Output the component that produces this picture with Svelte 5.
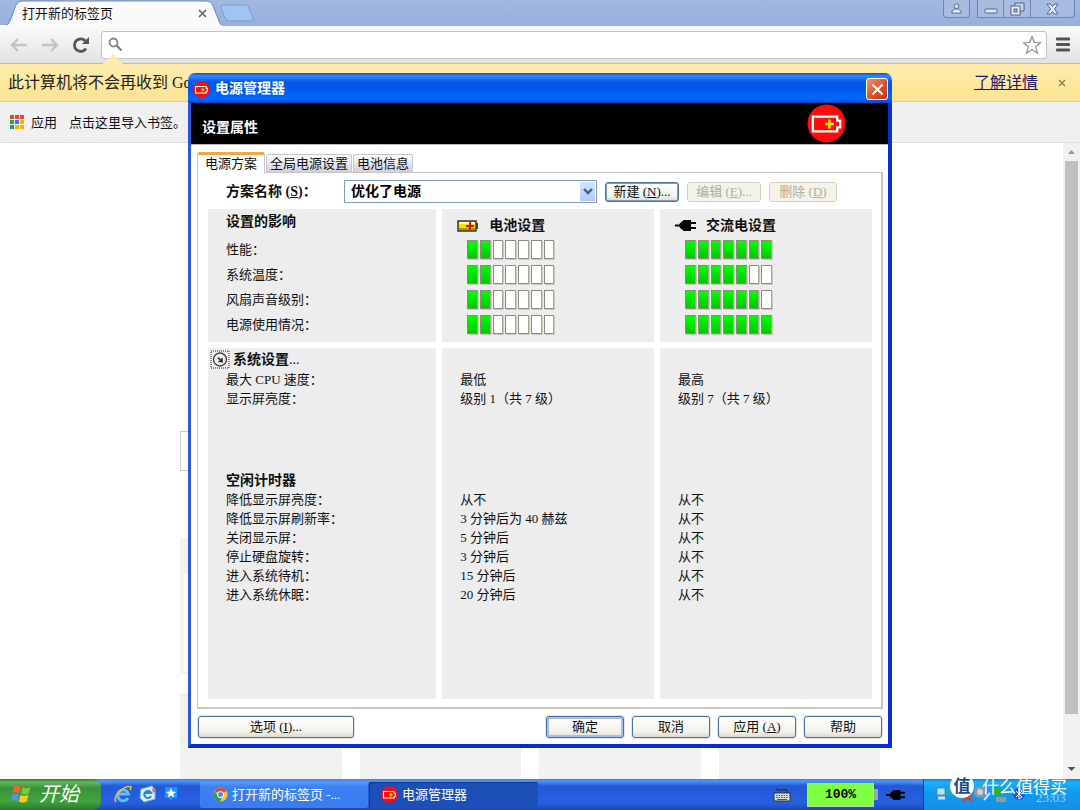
<script>
  const impact = [
    { label: '性能：', battery: 2, ac: 7 },
    { label: '系统温度：', battery: 2, ac: 5 },
    { label: '风扇声音级别：', battery: 2, ac: 6 },
    { label: '电源使用情况：', battery: 2, ac: 7 },
  ];
  const system = [
    { label: '最大 CPU 速度：', battery: '最低', ac: '最高' },
    { label: '显示屏亮度：', battery: '级别 1（共 7 级）', ac: '级别 7（共 7 级）' },
  ];
  const timers = [
    { label: '降低显示屏亮度：', battery: '从不', ac: '从不' },
    { label: '降低显示屏刷新率：', battery: '3 分钟后为 40 赫兹', ac: '从不' },
    { label: '关闭显示屏：', battery: '5 分钟后', ac: '从不' },
    { label: '停止硬盘旋转：', battery: '3 分钟后', ac: '从不' },
    { label: '进入系统待机：', battery: '15 分钟后', ac: '从不' },
    { label: '进入系统休眠：', battery: '20 分钟后', ac: '从不' },
  ];
  const cells = [1, 2, 3, 4, 5, 6, 7];
  const appDots = ['#e8453c', '#e8453c', '#e8453c', '#2ba24c', '#3b7ded', '#f5b400', '#2ba24c', '#f5b400', '#f5b400'];
</script>

{#snippet powerIcon(size)}
  <svg width={size} height={size} viewBox="0 0 40 40" aria-hidden="true">
    <circle cx="20" cy="20" r="19.5" fill="#fb0d0d" />
    <path d="M6 13H31V17H34V24H31V28H6Z" fill="none" stroke="#fff" stroke-width="2.4" />
    <path d="M23 16V25M18.500 20.500H27.500" stroke="#d8f000" stroke-width="2.600" />
  </svg>
{/snippet}

{#snippet plugIcon(w, h)}
  <svg width={w} height={h} viewBox="0 0 21 13" aria-hidden="true">
    <path d="M0 5.500H4L6 3L8 2V1H16V3H21V5H16V8H21V10H16V12H8V11L6 10L4 7.500H0Z" fill="#050505" />
  </svg>
{/snippet}

{#snippet meter(value)}
  <div class="meter" role="meter" aria-valuemin="0" aria-valuemax="7" aria-valuenow={value} aria-label="级别">
    {#each cells as n}<i class:on={n <= value}></i>{/each}
  </div>
{/snippet}

<div class="screen">
  <main class="browser">
    <div class="tabstrip">
      <svg class="tabshape" width="222" height="26" viewBox="0 0 222 26" aria-hidden="true">
        <path d="M0 26H4Q8 26 10 21L16 5Q18 1 22 1H206Q211 1 213 6L219 21Q221 26 222 26Z" fill="#fafafa" stroke="#7187b3" />
        <path d="M0 26H222" stroke="#fafafa" stroke-width="2" />
      </svg>
      <div class="tablabel">
        <span>打开新的标签页</span>
        <button class="plain" aria-label="关闭标签页">
          <svg width="9" height="9" viewBox="0 0 9 9"><path d="M1 1L8 8M8 1L1 8" stroke="#666" stroke-width="1.600" /></svg>
        </button>
      </div>
      <button class="plain newtab" aria-label="新标签页">
        <svg width="34" height="18" viewBox="0 0 34 18"><path d="M3 1H25Q28 1 29 4L33 14Q33 17 30 17H9Q6 17 5 14L1 4Q1 1 3 1Z" fill="#a0c5f2" stroke="#7d9bd0" /></svg>
      </button>
      <div class="winbuttons">
        <button class="wb person" aria-label="用户">
          <svg width="11" height="11" viewBox="0 0 12 12"><circle cx="6" cy="3.500" r="2.500" fill="#dfe7f5" stroke="#556585" /><path d="M1 11V9L4 6.500H8L11 9V11Z" fill="#dfe7f5" stroke="#556585" /></svg>
        </button>
        <div class="wbgroup">
          <button class="wb" aria-label="最小化"><svg width="14" height="12" viewBox="0 0 14 12"><rect x="1" y="6" width="12" height="4" rx="1" fill="#e4ebf7" stroke="#556585" /></svg></button>
          <button class="wb" aria-label="还原"><svg width="15" height="14" viewBox="0 0 15 14"><path d="M5 1H14V9H5Z" fill="#c8d5ed" stroke="#556585" /><rect x="1" y="4" width="9" height="9" fill="#e4ebf7" stroke="#556585" /><rect x="4" y="7" width="3" height="3" fill="#a3b8de" stroke="#556585" /></svg></button>
          <button class="wb close" aria-label="关闭"><svg width="13" height="12" viewBox="0 0 13 12"><path d="M1 1H4.500L6.500 3.500L8.500 1H12L8.500 6L12 11H8.500L6.500 8.500L4.500 11H1L4.500 6Z" fill="#e4ebf7" stroke="#556585" /></svg></button>
        </div>
      </div>
    </div>

    <div class="toolbar">
      <button class="plain" aria-label="后退"><svg width="18" height="14" viewBox="0 0 18 14"><path d="M8 1L2 7L8 13M2 7H17" fill="none" stroke="#c4c4c4" stroke-width="2.400" /></svg></button>
      <button class="plain" aria-label="前进"><svg width="18" height="14" viewBox="0 0 18 14"><path d="M10 1L16 7L10 13M16 7H1" fill="none" stroke="#c4c4c4" stroke-width="2.400" /></svg></button>
      <button class="plain" aria-label="重新加载"><svg width="18" height="18" viewBox="0 0 18 18"><path d="M14 12.500A6.300 6.300 0 1 1 13.500 5" fill="none" stroke="#555" stroke-width="2.800" /><path d="M17 1V8H10Z" fill="#555" /></svg></button>
      <div class="omnibox">
        <svg width="15" height="15" viewBox="0 0 15 15" aria-hidden="true"><circle cx="5.500" cy="5.500" r="4" fill="none" stroke="#888" stroke-width="1.800" /><path d="M8.500 8.500L13.500 13.500" stroke="#888" stroke-width="2.400" /></svg>
        <input type="text" aria-label="地址栏" />
        <button class="plain" aria-label="收藏"><svg width="20" height="20" viewBox="0 0 20 20"><path d="M10 1.500L12.300 7.300L18.500 7.700L13.700 11.600L15.300 18L10 14.500L4.700 18L6.300 11.600L1.500 7.700L7.700 7.300Z" fill="#fff" stroke="#999" stroke-width="1.300" /></svg></button>
      </div>
      <button class="plain menu" aria-label="菜单"><svg width="14" height="15" viewBox="0 0 14 15"><path d="M1 2H13M1 7.500H13M1 13H13" stroke="#555" stroke-width="2.800" stroke-linecap="round" /></svg></button>
    </div>

    <div class="infobar">
      <svg class="notch" width="20" height="10" viewBox="0 0 20 10" aria-hidden="true"><path d="M0 10L10 0L20 10Z" fill="#feecae" /></svg>
      <span>此计算机将不会再收到 Go</span>
      <a href="#details">了解详情</a>
      <button class="plain" aria-label="关闭信息栏"><svg width="8" height="8" viewBox="0 0 8 8"><path d="M1 1L7 7M7 1L1 7" stroke="#8c825e" stroke-width="1.500" /></svg></button>
    </div>

    <div class="bookmarks">
      <a href="#apps">
        <svg width="14" height="14" viewBox="0 0 14 14" aria-hidden="true">
          {#each appDots as c, i}<rect x={(i % 3) * 5} y={Math.floor(i / 3) * 5} width="4" height="4" fill={c} />{/each}
        </svg>
        应用
      </a>
      <span>点击这里导入书签。</span>
    </div>

    <div class="viewport">
      <div class="page">
        <div class="searchbox"></div>
        <div class="thumbs first">{#each [1, 2, 3, 4] as t}<div class="thumb"><div></div></div>{/each}</div>
        <div class="thumbs">{#each [1, 2, 3, 4] as t}<div class="thumb"></div>{/each}</div>
      </div>
      <div class="scrollbar">
        <svg width="17" height="18" viewBox="0 0 17 18" aria-hidden="true"><path d="M5 11L8.500 7L12 11Z" fill="#999" /></svg>
        <div class="track"><div class="handle"></div></div>
        <svg width="17" height="17" viewBox="0 0 17 17" aria-hidden="true"><path d="M4.500 5H12.500L8.500 9Z" fill="#555" /></svg>
      </div>
    </div>
  </main>

  <section class="dialog" aria-label="电源管理器">
    <header class="titlebar">
      {@render powerIcon(17)}
      <h1>电源管理器</h1>
      <button class="xclose" aria-label="关闭"><svg width="13" height="13" viewBox="0 0 13 13"><path d="M1.500 1.500L11.500 11.500M11.500 1.500L1.500 11.500" stroke="#fff" stroke-width="2.200" /></svg></button>
    </header>
    <div class="frame">
      <div class="banner">
        <h2>设置属性</h2>
        {@render powerIcon(39)}
      </div>
      <div class="body">
        <div class="tabs" role="tablist">
          <button role="tab" class="active" aria-selected="true">电源方案</button>
          <button role="tab" aria-selected="false">全局电源设置</button>
          <button role="tab" aria-selected="false">电池信息</button>
        </div>
        <div class="panel">
          <div class="scheme">
            <label for="scheme">方案名称 (<u>S</u>)：</label>
            <div class="combo">
              <select id="scheme"><option>优化了电源</option></select>
              <span class="arrow"><svg width="10" height="7" viewBox="0 0 10 7" aria-hidden="true"><path d="M1 1L5 5L9 1" fill="none" stroke="#445a88" stroke-width="2.400" /></svg></span>
            </div>
            <button class="xp focusring">新建 (<u>N</u>)...</button>
            <button class="xp" disabled>编辑 (<u>E</u>)...</button>
            <button class="xp narrow" disabled>删除 (<u>D</u>)</button>
          </div>

          <table>
            <colgroup><col class="c1" /><col class="c2" /><col class="c3" /></colgroup>
            <tbody>
              <tr class="head">
                <th>设置的影响</th>
                <th class="src"><div>
                  <svg width="22" height="13" viewBox="0 0 22 13" aria-hidden="true"><rect x="1" y="2" width="18" height="10" fill="#f2e600" stroke="#333" stroke-width="1.500" /><rect x="2" y="3" width="16" height="2" fill="#fffcb0" /><rect x="2" y="9" width="16" height="2" fill="#a89b00" /><rect x="19" y="4" width="2" height="6" fill="#444" /><path d="M13 3V11M9 7H17" stroke="#e01010" stroke-width="2" /></svg>
                  电池设置
                </div></th>
                <th class="src"><div>{@render plugIcon(21, 13)}交流电设置</div></th>
              </tr>
              {#each impact as r}
                <tr class="tall"><th scope="row" class="lbl">{r.label}</th><td class="m">{@render meter(r.battery)}</td><td class="m">{@render meter(r.ac)}</td></tr>
              {/each}
              <tr class="end"><td></td><td></td><td></td></tr>
            </tbody>
            <tbody>
              <tr class="gap"><td colspan="3"></td></tr>
              <tr class="sys">
                <th><div>
                  <svg width="20" height="19" viewBox="0 0 20 19" aria-hidden="true"><rect x="1" y="1" width="18" height="17" fill="none" stroke="#222" stroke-dasharray="1 1" /><circle cx="10" cy="9.500" r="6.500" fill="#eee" stroke="#444" stroke-width="1.400" /><path d="M8 7.500L12 11.500V8M12 11.500H8.500" fill="none" stroke="#222" stroke-width="1.500" /></svg>
                  <span>系统设置<em>...</em></span>
                </div></th><td></td><td></td>
              </tr>
              {#each system as r}
                <tr><th scope="row" class="lbl">{r.label}</th><td>{r.battery}</td><td>{r.ac}</td></tr>
              {/each}
              <tr class="space"><td></td><td></td><td></td></tr>
              <tr><th>空闲计时器</th><td></td><td></td></tr>
              {#each timers as r}
                <tr><th scope="row" class="lbl">{r.label}</th><td>{r.battery}</td><td>{r.ac}</td></tr>
              {/each}
              <tr class="tail"><td></td><td></td><td></td></tr>
            </tbody>
          </table>
        </div>
        <footer>
          <button class="xp options">选项 (<u>I</u>)...</button>
          <button class="xp default">确定</button>
          <button class="xp">取消</button>
          <button class="xp">应用 (<u>A</u>)</button>
          <button class="xp">帮助</button>
        </footer>
      </div>
    </div>
  </section>

  <nav class="taskbar">
    <button class="start">
      <svg width="21" height="21" viewBox="0 0 20 20" aria-hidden="true">
        <path d="M3 3Q6 1 9.500 3L8 9.500Q5 8 1.500 9.500Z" fill="#f06424" />
        <path d="M11 4Q14 5.500 18.500 4L17 10Q13 11.500 9.500 10Z" fill="#7fc832" />
        <path d="M1 11Q4 9.500 7.600 11L6 17Q3 15.500 0 17Z" fill="#5a8df0" />
        <path d="M9 11.500Q12 13 16.500 11.500L15 17.500Q11 19.500 7.500 17.500Z" fill="#fbc81e" />
      </svg>
      <span>开始</span>
    </button>
    <div class="quick">
      <a href="#ie" aria-label="Internet Explorer"><svg width="18" height="18" viewBox="0 0 18 18"><path d="M14 13A5.500 5.500 0 1 1 14.500 9H5" fill="none" stroke="#5cc2f7" stroke-width="2.800" /><path d="M2 17Q-1 13 6 6Q13 0 17 2Q17 3 16 5" fill="none" stroke="#f5bb32" stroke-width="1.700" /></svg></a>
      <a href="#mail" aria-label="邮件"><svg width="18" height="18" viewBox="0 0 18 18"><path d="M2 4L13 1L16 5V14L5 17L1 13Z" fill="#d9eefa" stroke="#77b5e0" /><path d="M12 11A3.500 3.500 0 1 1 12 8H6" fill="none" stroke="#2a83cc" stroke-width="2" /><path d="M13 3L17 6L14 8Z" fill="#e0653c" /></svg></a>
      <a href="#star" aria-label="收藏"><svg width="14" height="16" viewBox="0 0 14 16"><path d="M1 1H13V12H9L7 15L5 12H1Z" fill="#1e96ff" /><path d="M7 2L8.500 5.500L12 6L9.300 8L10.200 11.500L7 9.600L3.800 11.500L4.700 8L2 6L5.500 5.500Z" fill="#fff" /></svg></a>
    </div>
    <div class="tasks">
      <button>
        <svg width="15" height="15" viewBox="0 0 16 16" aria-hidden="true"><circle cx="8" cy="8" r="7.500" fill="#fbc62e" /><path d="M8 8L1.500 4.200A7.500 7.500 0 0 1 14.500 4.200Z" fill="#df4b3c" /><path d="M1.500 4.200A7.500 7.500 0 0 0 7.500 15.500L10.500 9L6 10Z" fill="#2f9e53" /><circle cx="8" cy="8" r="3.600" fill="#fff" /><circle cx="8" cy="8" r="2.700" fill="#4b8bf5" /></svg>
        <span>打开新的标签页 -...</span>
      </button>
      <button class="pressed">{@render powerIcon(17)}<span>电源管理器</span></button>
    </div>
    <div class="band">
      <svg width="18" height="15" viewBox="0 0 18 15" aria-hidden="true"><path d="M4 1V3H14V6" fill="none" stroke="#222" /><rect x="1" y="6" width="16" height="8" fill="#ddd" stroke="#333" /><path d="M3 8.500H15M3 10.500H15" stroke="#555" stroke-dasharray="1.500 1" /><path d="M4 12.500H14" stroke="#555" /></svg>
      <div class="battery"><div class="charge">100%</div><i></i></div>
      {@render plugIcon(19, 14)}
    </div>
    <div class="tray">
      <div class="icons">
        <svg width="112" height="20" viewBox="0 0 112 20" aria-hidden="true">
          <rect x="1" y="4" width="8" height="7" fill="#b9e0ff" stroke="#5a88b0" /><path d="M2 14H9" stroke="#ddd" stroke-width="3" /><path d="M11 5V10M13.500 4V11M16 3V12" stroke="#37c24a" stroke-width="1.300" />
          <path d="M26 10L36 17M36 10L26 17" stroke="#d43a3a" stroke-width="2.500" />
          <circle cx="44" cy="8" r="6" fill="#8b97a3" /><circle cx="44" cy="8" r="3" fill="#c7d2da" /><path d="M48 16L54 9" stroke="#cfe0ff" stroke-width="2" />
          <path d="M58 3H66V9L62 14L58 9Z" fill="#35ad36" /><path d="M60 13H70V18H60Z" fill="#8f9aa0" />
          <circle cx="83" cy="10" r="6" fill="#2456e0" /><path d="M80 7L86 13L83 15V4L86 7L80 13" fill="none" stroke="#fff" />
        </svg>
        <span class="clock">23:03</span>
      </div>
      <div class="mark"><b>值</b><span>什么值得买</span></div>
    </div>
  </nav>
</div>

<style>
  :global(body) { margin: 0; }
  .screen {
    position: relative;
    display: flex;
    flex-direction: column;
    min-height: 100vh;
    font-family: "Liberation Serif", "Noto Sans CJK SC", serif;
    font-size: 13px;
    line-height: 19px;
    color: #111;
    background: #fff;
  }
  .screen :global(*) { box-sizing: border-box; }
  svg { display: block; flex: none; }
  button { font: inherit; color: inherit; white-space: nowrap; }
  .plain { border: 0; padding: 0; background: none; }
  h1, h2 { margin: 0; font-size: 14px; line-height: 20px; color: #fff; }

  .browser { flex: 1; display: flex; flex-direction: column; }
  .tabstrip { position: relative; display: flex; height: 26px; background: linear-gradient(#a2b8e0, #98afdb); }
  .tabshape { position: absolute; left: 0; top: 0; }
  .tablabel { position: relative; width: 220px; padding: 0 13px 0 22px; display: flex; align-items: center; justify-content: space-between; }
  .newtab { height: 18px; margin-top: 4px; }
  .winbuttons { margin-left: auto; display: flex; gap: 7px; padding-right: 5px; }
  .wbgroup { display: flex; }
  .wb { width: 27px; height: 18px; display: flex; align-items: center; justify-content: center; padding: 0; border: 1px solid #7085ad; border-top: 0; background: #a8bbe0; }
  .wbgroup .wb + .wb { border-left: 0; }
  .wb.close { width: 44px; border-radius: 0 0 4px 0; }
  .wb.person { border-radius: 0 0 4px 4px; }

  .toolbar { display: flex; align-items: center; gap: 13px; height: 38px; padding: 0 10px; background: linear-gradient(#fafafa, #e2e2e2); border-bottom: 1px solid #bcbcbc; }
  .omnibox { flex: 1; display: flex; align-items: center; height: 28px; margin: 0 -4px 0 -2px; padding: 0 4px 0 6px; background: #fff; border: 1px solid #c2c2c2; border-radius: 3px; }
  .omnibox input { flex: 1; min-width: 0; border: 0; outline: 0; background: none; font: inherit; }

  .infobar { position: relative; display: flex; align-items: center; height: 38px; padding: 0 14px 0 8px; font-size: 16px; line-height: 22px; color: #222; background: linear-gradient(#feecae, #fae48f); border-bottom: 1px solid #d9cfa0; }
  .notch { position: absolute; left: 103px; top: -10px; }
  .infobar a { margin-left: auto; margin-right: 20px; color: #24186e; }

  .bookmarks { display: flex; align-items: center; gap: 12px; height: 41px; padding: 0 10px; background: #f0f0f0; border-bottom: 1px solid #dedede; }
  .bookmarks a { display: flex; align-items: center; gap: 7px; color: inherit; text-decoration: none; }

  .viewport { flex: 1; display: flex; }
  .page { flex: 1; display: flex; flex-direction: column; padding: 288px 183px 0 180px; }
  .searchbox { height: 40px; margin-bottom: 68px; border: 1px solid #ccc; }
  .thumbs { flex: 1; display: grid; grid-template-columns: repeat(4, 1fr); gap: 18px; min-height: 86px; }
  .thumbs.first { flex: none; height: 134px; margin-bottom: 20px; }
  .thumb { background: #f1f1f1; padding: 34px 4px 1px; }
  .thumb div { height: 100%; background: #fff; }
  .thumbs:not(.first) .thumb { padding: 0; }
  .scrollbar { width: 17px; display: flex; flex-direction: column; background: #f1f1f1; }
  .track { flex: 1; padding: 0 2px 48px; }
  .handle { height: 100%; background: #c0c0c0; }

  .dialog { position: absolute; top: 73px; left: 188px; right: 188px; }
  .titlebar { display: flex; align-items: center; gap: 5px; height: 30px; padding: 2px 4px 0 5px; border-radius: 7px 7px 0 0; background: linear-gradient(#0a50d0, #2f8bfb 3px, #0558e6 9px, #0057e8 15px, #0068fe 26px, #0044cc); }
  .xclose { margin-left: auto; width: 22px; height: 22px; padding: 0; display: flex; align-items: center; justify-content: center; border: 1px solid #fff; border-radius: 3px; background: linear-gradient(135deg, #ef9078, #d84b22 60%, #c03a14); }
  .frame { border: solid #0a2fc8; border-width: 0 4px 4px 3px; border-left-color: #225ae6; background: #fff; }
  .banner { display: flex; align-items: center; justify-content: space-between; height: 41px; padding: 0 42px 0 11px; background: #000; }
  .banner h2 { padding-top: 9px; }
  .body { border-top: 1px solid #bbb; padding: 7px 5px 6px 6px; }

  .tabs { display: flex; align-items: flex-end; gap: 1px; height: 20px; }
  .tabs button { height: 18px; padding: 0 3px; line-height: 17px; border: 1px solid #c4c6c8; border-bottom: 0; border-radius: 3px 3px 0 0; background: linear-gradient(#fff, #cfcfe2); }
  .tabs .active { height: 21px; padding: 0 7px 2px; margin-bottom: -1px; line-height: 15px; border-top: 3px solid #f2a743; background: #fff; position: relative; }
  .panel { border: 1px solid #c9c7b8; border-right-width: 2px; border-bottom-width: 2px; padding: 7px 3px 8px 4px; }

  .scheme { display: flex; align-items: center; gap: 8px; padding: 0 41px 6px 24px; height: 29px; }
  .scheme label { width: 110px; font-size: 14px; font-weight: bold; white-space: nowrap; }
  .combo { position: relative; flex: 1; min-width: 0; }
  .combo select { display: block; width: 100%; height: 23px; padding: 0 6px; appearance: none; border: 1px solid #7f9db9; border-radius: 0; background: #fff; color: #000; font: bold 14px/19px "Liberation Serif", "Noto Sans CJK SC", serif; }
  .arrow { position: absolute; right: 2px; top: 2px; bottom: 2px; width: 15px; display: flex; align-items: center; justify-content: center; background: linear-gradient(#d5e2fd, #b3c9f8); pointer-events: none; }
  .xp { width: 78px; height: 22px; padding: 0; line-height: 18px; border: 1px solid #4a7196; border-radius: 3px; background: linear-gradient(#fff, #f2f1ea 75%, #dddacb); box-shadow: 0 0 0 1px #dfe5ea; }
  .scheme .xp { width: 74px; height: 20px; line-height: 16px; }
  .scheme .narrow { width: 68px; }
  .scheme .focusring { box-shadow: inset 0 0 0 1px #7aa0c8; }
  .xp.default { box-shadow: inset 0 0 0 2px #a3bff0, 0 0 0 1px #dfe5ea; }
  .xp:disabled { color: #b0ae9c; border-color: #d3d0bd; background: #f4f3ea; box-shadow: none; }

  table { width: 100%; table-layout: fixed; border-collapse: separate; border-spacing: 6px 0; }
  .c1 { width: 35%; }
  .c2, .c3 { width: 32.5%; }
  td, th { height: 19px; padding: 0 0 0 18px; text-align: left; vertical-align: middle; background: #ededed; white-space: nowrap; }
  th { font-size: 14px; }
  .lbl { font-size: 13px; font-weight: normal; }
  .head th { height: 28px; padding-bottom: 4px; }
  .head .src { padding: 4px 0 0 15px; }
  .src div { display: flex; align-items: center; gap: 10px; }
  .tall th, .tall td { height: 25px; }
  .tall .m { padding-left: 25px; }
  .end td { height: 5px; }
  .gap td { height: 6px; background: none; }
  .sys th, .sys td { height: 22px; padding-left: 2px; }
  .sys div { display: flex; align-items: center; gap: 3px; }
  em { font-style: normal; font-weight: normal; }
  .space td { height: 63px; }
  .tail td { height: 95px; }
  .meter { display: flex; gap: 2px; width: 87px; height: 19px; }
  .meter i { flex: 1; border: 1px solid #8d8a80; border-right-color: #a9a596; background: #fff; box-shadow: 1px 1px 0 #cdcabc; }
  .meter .on { background: linear-gradient(#00ff00, #00c800); }

  footer { display: flex; gap: 8px; padding: 7px 1px 0; }
  .options { width: 156px; margin-right: auto; }

  .taskbar { position: relative; display: flex; height: 31px; color: #fff; background: linear-gradient(#3a80e8, #4f96f5 2px, #2459d6 7px, #2660e2 24px, #1c48b4); }
  .start { width: 101px; padding: 0 0 2px 11px; display: flex; align-items: center; gap: 7px; border: 0; border-radius: 0 8px 8px 0; background: linear-gradient(#2d7a2d, #67b564 3px, #3a923a 9px, #3fa53f 22px, #2b7b2b); }
  .start span { font-size: 20px; line-height: 26px; font-style: italic; }
  .quick { display: flex; align-items: center; gap: 7px; width: 99px; padding: 0 0 2px 13px; }
  .tasks { display: flex; gap: 1px; padding: 3px 0 2px; }
  .tasks button { width: 168px; padding: 0 0 2px 13px; display: flex; align-items: center; gap: 4px; border: 0; border-radius: 2px; color: #fff; background: linear-gradient(#5a9bfa, #3b80f4 5px, #3a7cf0); }
  .tasks .pressed { width: 169px; padding-left: 12px; background: #1c4fb8; box-shadow: inset 1px 1px 1px #123880; }
  .band { display: flex; align-items: center; margin-left: auto; gap: 16px; padding-right: 18px; }
  .battery { display: flex; align-items: center; margin-right: -8px; }
  .battery i { width: 4px; height: 11px; background: #a0a89c; }
  .charge { width: 67px; height: 24px; border: 1px solid #b9d9a0; background: #80ff40; color: #000; font: bold 13px/22px "Liberation Mono", monospace; text-align: center; }
  .tray { position: relative; width: 157px; padding: 5px 10px 0 12px; background: linear-gradient(#1680dc, #1cb0f5 3px, #109cf0 12px, #1290e6); border-left: 1px solid #0b3f9c; }
  .icons { display: flex; align-items: flex-end; }
  .clock { margin-left: -12px; color: #9bd0f5; font-size: 13px; line-height: 13px; }
  .mark { position: absolute; left: 26px; top: -5px; display: flex; align-items: center; gap: 8px; font-family: "Noto Sans CJK SC", sans-serif; font-size: 17px; line-height: 18px; white-space: nowrap; }
  .mark b { width: 24px; height: 24px; border-radius: 12px; background: #fff; color: #164f86; line-height: 22px; text-align: center; }
</style>
